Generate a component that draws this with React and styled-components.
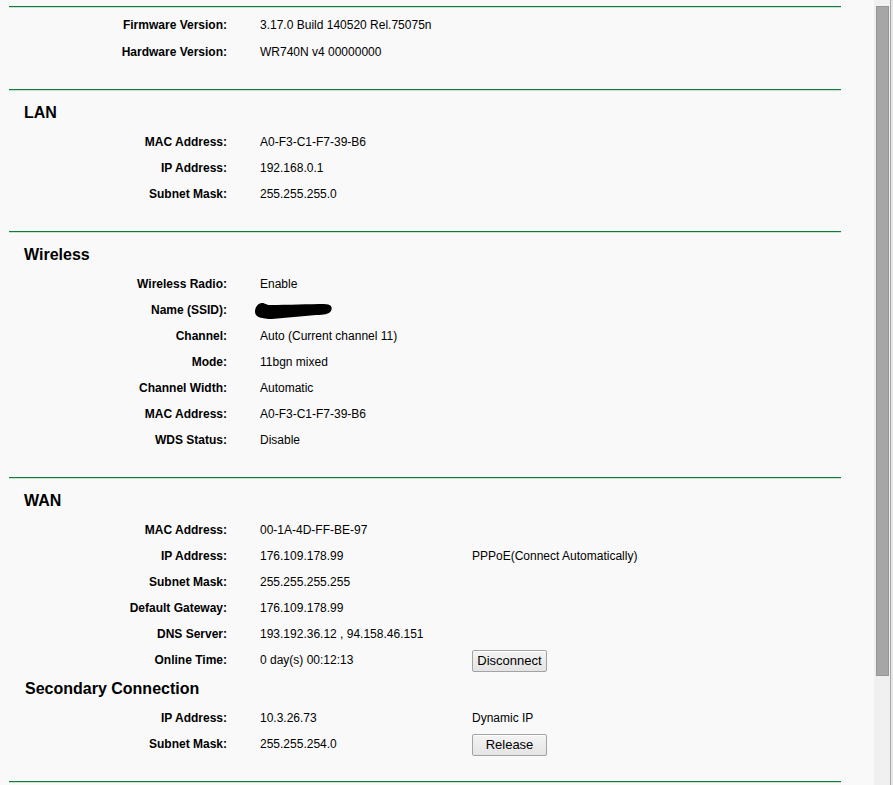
import React from "react";
import styled, { createGlobalStyle } from "styled-components";

const GlobalStyle = createGlobalStyle`
  html, body {
    margin: 0;
    padding: 0;
    background: #f9f9f9;
  }
  body {
    font-family: "Liberation Sans", Arial, sans-serif;
    font-size: 12px;
    color: #000;
  }
`;

const Frame = styled.div`
  display: flex;
  width: 893px;
  height: 785px;
  overflow: hidden;
  background: #f9f9f9;
`;

const Page = styled.div`
  flex: 1;
  padding: 6px 0 0 9px;
`;

const Main = styled.div`
  width: 832px;
`;

const Section = styled.div`
  border-top: 1px solid #137a3c;
  box-shadow: 0 1px 0 #c9e2d2 inset;
  padding: ${(p) => (p.$plain ? "5px 0 23px" : "13px 0 24px")};
`;

const Heading = styled.div`
  font-size: 16px;
  font-weight: bold;
  line-height: 20px;
  padding-left: ${(p) => p.$indent || 15}px;
  margin: ${(p) => (p.$sub ? "6px" : "0")} 0 6px 0;
`;

const Grid = styled.div`
  display: grid;
  grid-template-columns: 218px 245px 1fr;
`;

const Label = styled.div`
  font-weight: bold;
  text-align: right;
  height: ${(p) => p.$h || 26}px;
  line-height: ${(p) => p.$h || 26}px;
`;

const Value = styled.div`
  height: ${(p) => p.$h || 26}px;
  line-height: ${(p) => p.$h || 26}px;
  padding-left: 33px;
  white-space: nowrap;
  display: flex;
  align-items: center;
`;

const Extra = styled.div`
  height: ${(p) => p.$h || 26}px;
  line-height: ${(p) => p.$h || 26}px;
  display: flex;
  align-items: center;
  white-space: nowrap;
`;

const Button = styled.button`
  width: 75px;
  height: 22px;
  padding: 0;
  margin-top: 1px;
  font-family: "Liberation Sans", Arial, sans-serif;
  font-size: 13px;
  color: #000;
  border: 1px solid #a3a3a3;
  border-radius: 2px;
  background: linear-gradient(#f4f4f4, #e4e4e4);
  box-shadow: inset 0 1px 0 #fff;
`;

const Redacted = styled.svg`
  margin-left: -6px;
  margin-top: 2px;
`;

const ScrollTrack = styled.div`
  width: 17px;
  height: 785px;
  background: #f0f0f0;
  border-right: 1px solid #a8a8a8;
  box-shadow: 2px 0 0 #e6e6e6;
  margin-right: 2px;
  padding-top: 6px;
  box-sizing: border-box;
`;

const Thumb = styled.div`
  margin-left: 2px;
  width: 13px;
  height: 670px;
  box-sizing: border-box;
  background: #a6a6a6;
  border: 1px solid #969696;
`;

const SsidBlob = () => (
  <Redacted width="80" height="20" viewBox="0 0 80 20">
    <path
      d="M1 11 C 1 5, 5 2, 8 2 C 11 2, 12 4, 16 4 C 34 4, 56 3, 70 3 C 77 3, 79 6, 77 10 C 75 13, 70 14, 62 14 C 48 15, 32 17, 18 18 C 8 18, 1 16, 1 11 Z"
      fill="#000"
    />
  </Redacted>
);

const Rows = ({ rows, h }) => (
  <Grid>
    {rows.map((r, i) => (
      <React.Fragment key={i}>
        <Label $h={h}>{r.label}</Label>
        <Value $h={h}>{r.value}</Value>
        <Extra $h={h}>{r.extra}</Extra>
      </React.Fragment>
    ))}
  </Grid>
);

export default function App() {
  return (
    <>
      <GlobalStyle />
      <Frame>
        <Page>
          <Main>
            <Section $plain>
              <Rows
                h={27}
                rows={[
                  { label: "Firmware Version:", value: "3.17.0 Build 140520 Rel.75075n" },
                  { label: "Hardware Version:", value: "WR740N v4 00000000" },
                ]}
              />
            </Section>

            <Section>
              <Heading>LAN</Heading>
              <Rows
                rows={[
                  { label: "MAC Address:", value: "A0-F3-C1-F7-39-B6" },
                  { label: "IP Address:", value: "192.168.0.1" },
                  { label: "Subnet Mask:", value: "255.255.255.0" },
                ]}
              />
            </Section>

            <Section>
              <Heading>Wireless</Heading>
              <Rows
                rows={[
                  { label: "Wireless Radio:", value: "Enable" },
                  { label: "Name (SSID):", value: <SsidBlob /> },
                  { label: "Channel:", value: "Auto (Current channel 11)" },
                  { label: "Mode:", value: "11bgn mixed" },
                  { label: "Channel Width:", value: "Automatic" },
                  { label: "MAC Address:", value: "A0-F3-C1-F7-39-B6" },
                  { label: "WDS Status:", value: "Disable" },
                ]}
              />
            </Section>

            <Section>
              <Heading>WAN</Heading>
              <Rows
                rows={[
                  { label: "MAC Address:", value: "00-1A-4D-FF-BE-97" },
                  {
                    label: "IP Address:",
                    value: "176.109.178.99",
                    extra: "PPPoE(Connect Automatically)",
                  },
                  { label: "Subnet Mask:", value: "255.255.255.255" },
                  { label: "Default Gateway:", value: "176.109.178.99" },
                  { label: "DNS Server:", value: "193.192.36.12 , 94.158.46.151" },
                  {
                    label: "Online Time:",
                    value: "0 day(s) 00:12:13",
                    extra: <Button>Disconnect</Button>,
                  },
                ]}
              />
              <Heading $sub $indent={16}>
                Secondary Connection
              </Heading>
              <Rows
                rows={[
                  { label: "IP Address:", value: "10.3.26.73", extra: "Dynamic IP" },
                  {
                    label: "Subnet Mask:",
                    value: "255.255.254.0",
                    extra: <Button>Release</Button>,
                  },
                ]}
              />
            </Section>

            <Section />
          </Main>
        </Page>
        <ScrollTrack>
          <Thumb />
        </ScrollTrack>
      </Frame>
    </>
  );
}
